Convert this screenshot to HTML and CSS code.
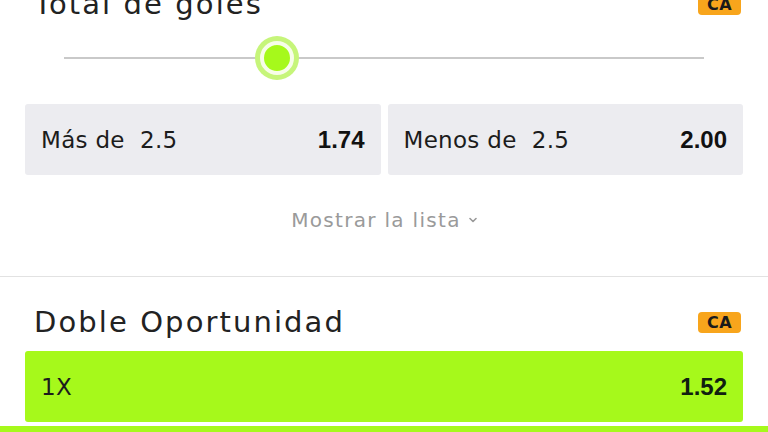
FILE: index.html
```html
<!DOCTYPE html>
<html lang="es">
<head>
<meta charset="utf-8">
<title>Mercados</title>
<link rel="stylesheet" href="styles.css">
</head>
<body>
<div class="page">
  <section class="market first">
    <div class="market-head">
      <h2 class="market-title">Total de goles</h2>
      <span class="badge">CA</span>
    </div>
    <div class="slider">
      <div class="track"></div>
      <div class="thumb"><div class="thumb-core"></div></div>
    </div>
    <div class="odds two">
      <div class="odd"><span class="odd-label">Más de&nbsp; 2.5</span><span class="odd-value">1.74</span></div>
      <div class="odd"><span class="odd-label">Menos de&nbsp; 2.5</span><span class="odd-value">2.00</span></div>
    </div>
    <div class="show-list">Mostrar la lista <svg class="chev" width="8" height="6" viewBox="0 0 8 6"><path d="M1 1.5 L4 4.5 L7 1.5" fill="none" stroke="#9a9a9a" stroke-width="1.6" stroke-linecap="round" stroke-linejoin="round"/></svg></div>
  </section>
  <section class="market second">
    <div class="market-head">
      <h2 class="market-title">Doble Oportunidad</h2>
      <span class="badge">CA</span>
    </div>
    <div class="odds one">
      <div class="odd selected"><span class="odd-label">1X</span><span class="odd-value">1.52</span></div>
    </div>
  </section>
  <div class="bottom-bar"></div>
</div>
</body>
</html>
```
FILE: styles.css
```css
* { box-sizing: border-box; }
html, body { margin: 0; padding: 0; background: #fff; }
body { font-family: "DejaVu Sans", "Open Sans", sans-serif; color: #1c1c1c; overflow: hidden; }
.page { width: 768px; height: 432px; overflow: hidden; }
.market { padding: 0 25px; }
.first { margin-top: -6px; border-bottom: 1px solid #e2e2e2; padding-bottom: 45px; }
.market-head { display: flex; justify-content: space-between; align-items: flex-end; height: 21px; }
.market-title { margin: 0 0 0 9px; font-size: 29px; font-weight: 400; letter-spacing: 2.1px; line-height: 21px; color: #222; white-space: nowrap; }
.badge { width: 43px; height: 21px; margin-right: 2px; border-radius: 4px; background: #f8a51c; color: #1a1a1a; font-size: 16px; font-weight: 700; letter-spacing: 0.5px; line-height: 21px; text-align: center; }
.slider { position: relative; height: 89px; margin: 0 39px; }
.track { position: absolute; left: 0; right: 0; top: 42px; height: 2px; background: #c9c9c9; }
.thumb { position: absolute; left: 191px; top: 21px; width: 44px; height: 44px; border-radius: 50%; background: #c6f57a; display: flex; align-items: center; justify-content: center; }
.thumb-core { width: 34px; height: 34px; border-radius: 50%; background: #a6f91b; border: 4px solid #f7fde9; }
.odds { display: grid; gap: 7px; }
.odds.two { grid-template-columns: 1fr 1fr; }
.odds.one { grid-template-columns: 1fr; margin-top: 18px; }
.odd { height: 71px; border-radius: 3px; background: #ececf0; display: flex; align-items: center; justify-content: space-between; padding: 0 16px 0 16px; font-size: 23px; }
.odd-label { color: #1c1c1c; letter-spacing: 0.3px; }
.odd-value { font-family: "Liberation Sans", "DejaVu Sans", sans-serif; font-weight: 700; font-size: 24px; color: #111; }
.odd.selected { background: #a6f91b; }
.odd.selected .odd-value { color: #102010; }
.show-list { display: flex; justify-content: center; align-items: center; gap: 8px; margin-top: 34px; font-size: 20px; letter-spacing: 1.3px; color: #9a9a9a; line-height: 22px; }
.second { padding-top: 35px; }
.bottom-bar { height: 6px; margin-top: 4px; background: #a6f91b; }
```
